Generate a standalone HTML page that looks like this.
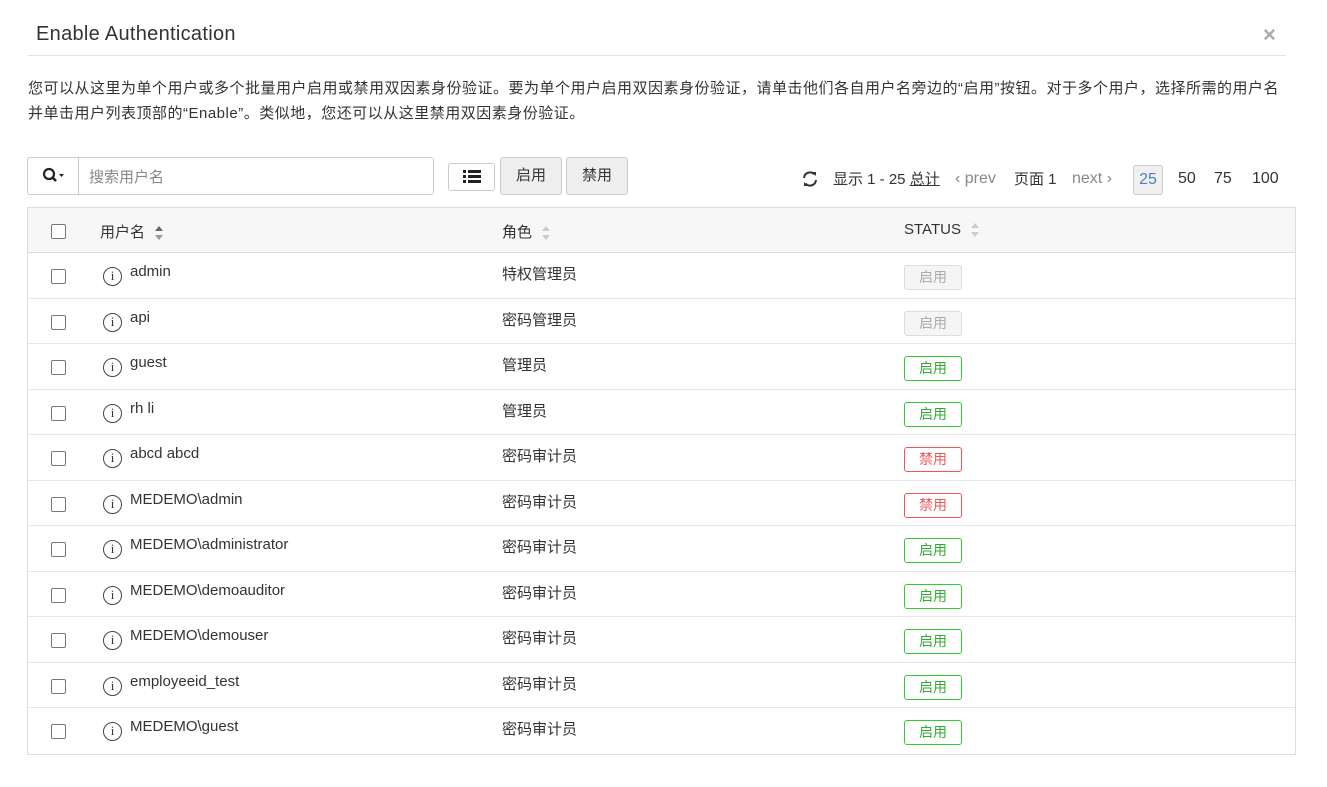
<!DOCTYPE html>
<html><head><meta charset="utf-8"><style>
*{box-sizing:border-box;margin:0;padding:0}
body{width:1327px;height:787px;background:#fff;font-family:"Liberation Sans","Noto Sans CJK SC",sans-serif;color:#333;font-size:14px;position:relative;overflow:hidden}
.abs{position:absolute}
.title{left:36px;top:23px;font-size:20px;color:#333;letter-spacing:0.3px}
.hr{left:28px;top:55px;width:1258px;height:1px;background:#e2e2e2}
.close{left:1263px;top:22px;font-size:22px;color:#aaa;font-weight:bold}
.desc{left:28px;top:76px;width:1300px;font-size:15px;line-height:25px;color:#333;letter-spacing:0.5px;white-space:nowrap}
.search{left:27px;top:157px;width:407px;height:38px;border:1px solid #ccc;border-radius:3px}
.search .sep{position:absolute;left:50px;top:0;width:1px;height:36px;background:#ccc}
.search .ph{position:absolute;left:61px;top:8px;color:#888;font-size:15px}
.btn{height:38px;border:1px solid #ccc;border-radius:3px;background:#eee;font-size:15px;text-align:center;line-height:36px}
.tbl{left:27px;top:207px;width:1269px;height:548px;border:1px solid #ddd}
.thead{position:absolute;left:0;top:0;width:100%;height:45px;background:#f7f7f7;border-bottom:1px solid #ddd}
.row{position:absolute;left:0;width:100%;height:45.5px;border-bottom:1px solid #e6e6e6}
.cb{position:absolute;left:23px;width:15px;height:15px;border:1px solid #777;border-radius:2px;background:#fff}
.txt{position:absolute;font-size:15px;color:#333}
.badge{position:absolute;left:876px;width:58px;height:25px;border:1px solid;border-radius:3px;font-size:14px;text-align:center;line-height:23px}
.g{border-color:#3c3;color:#3a3}.r{border-color:#e55;color:#e55}.d{border-color:#ddd;color:#aaa;background:#f5f5f5}
.info{position:absolute;left:75px;width:19px;height:19px;border:1.5px solid #444;border-radius:50%;font-family:"Liberation Serif",serif;font-size:13px;text-align:center;line-height:16px;color:#333}
.sort{display:inline-block;margin-left:10px;vertical-align:middle;position:relative;width:8px;height:14px}
.sort:before{content:"";position:absolute;top:0;left:0;border:4px solid transparent;border-bottom:5px solid #ccc;border-top:0}
.sort:after{content:"";position:absolute;bottom:0;left:0;border:4px solid transparent;border-top:5px solid #ccc;border-bottom:0}
.sort.a:before{border-bottom-color:#666}
.sort.a:after{border-top-color:#999}
</style></head><body>
<div class="abs title">Enable Authentication</div>
<div class="abs close">×</div>
<div class="abs hr"></div>
<div class="abs desc">您可以从这里为单个用户或多个批量用户启用或禁用双因素身份验证。要为单个用户启用双因素身份验证，请单击他们各自用户名旁边的“启用”按钮。对于多个用户，选择所需的用户名<br>并单击用户列表顶部的“Enable”。类似地，您还可以从这里禁用双因素身份验证。</div>
<div class="abs search"><svg style="position:absolute;left:14px;top:9px" width="24" height="18"><circle cx="7" cy="7" r="5" fill="none" stroke="#222" stroke-width="2.2"/><line x1="10.5" y1="10.5" x2="14" y2="14" stroke="#222" stroke-width="2.5"/><path d="M17 7h5l-2.5 3z" fill="#222"/></svg><div class="sep"></div><div class="ph">搜索用户名</div></div>
<div class="abs btn" style="left:448px;top:163px;width:47px;height:28px;background:#fff;line-height:26px"><svg width="18" height="14" style="margin-top:6px"><g fill="#222"><rect x="0" y="0" width="3" height="3"/><rect x="5" y="0" width="13" height="3"/><rect x="0" y="5" width="3" height="3"/><rect x="5" y="5" width="13" height="3"/><rect x="0" y="10" width="3" height="3"/><rect x="5" y="10" width="13" height="3"/></g></svg></div>
<div class="abs btn" style="left:500px;top:157px;width:62px">启用</div>
<div class="abs btn" style="left:566px;top:157px;width:62px">禁用</div>
<svg class="abs" style="left:802px;top:171px" width="16" height="16" viewBox="0 0 16 16"><path d="M2 7a6 6 0 0 1 10.5-3.5M14 9a6 6 0 0 1-10.5 3.5" fill="none" stroke="#333" stroke-width="2"/><path d="M10 1l4 0l0 4z M6 15l-4 0l0-4z" fill="#333"/></svg>
<div class="abs" style="left:833px;top:168px;font-size:15px">显示 1 - 25 <u>总计</u></div>
<div class="abs" style="left:955px;top:170px;font-size:16px;color:#888">‹ prev</div>
<div class="abs" style="left:1014px;top:168px;font-size:15px">页面 1</div>
<div class="abs" style="left:1072px;top:170px;font-size:16px;color:#888">next ›</div>
<div class="abs" style="left:1133px;top:165px;width:30px;height:30px;border:1px solid #ccc;border-radius:3px;background:#f0f0f0;color:#4a7fc0;font-size:16px;text-align:center;line-height:28px">25</div>
<div class="abs" style="left:1178px;top:170px;font-size:16px">50</div>
<div class="abs" style="left:1214px;top:170px;font-size:16px">75</div>
<div class="abs" style="left:1252px;top:170px;font-size:16px">100</div>
<div class="abs tbl">
<div class="thead"><div class="cb" style="top:16px"></div>
<div class="txt" style="left:72px;top:13px">用户名<span class="sort a"></span></div>
<div class="txt" style="left:474px;top:13px">角色<span class="sort"></span></div>
<div class="txt" style="left:876px;top:13px">STATUS<span class="sort"></span></div></div>
<div id="rows"></div>
</div>
<script>
var d=[["admin","特权管理员","d","启用"],["api","密码管理员","d","启用"],["guest","管理员","g","启用"],["rh li","管理员","g","启用"],["abcd abcd","密码审计员","r","禁用"],["MEDEMO\\admin","密码审计员","r","禁用"],["MEDEMO\\administrator","密码审计员","g","启用"],["MEDEMO\\demoauditor","密码审计员","g","启用"],["MEDEMO\\demouser","密码审计员","g","启用"],["employeeid_test","密码审计员","g","启用"],["MEDEMO\\guest","密码审计员","g","启用"]];
var h="";d.forEach(function(r,i){var t=45+i*45.5;h+='<div class="row" style="top:'+t+'px'+(i==10?';border-bottom:0':'')+'"><div class="cb" style="top:16px"></div><div class="info" style="top:14px">i</div><div class="txt" style="left:102px;top:10px">'+r[0].replace(/</g,"&lt;")+'</div><div class="txt" style="left:474px;top:10px">'+r[1]+'</div><div class="badge '+r[2]+'" style="top:12px">'+r[3]+'</div></div>'});
document.getElementById("rows").innerHTML=h;
</script>
</body></html>
